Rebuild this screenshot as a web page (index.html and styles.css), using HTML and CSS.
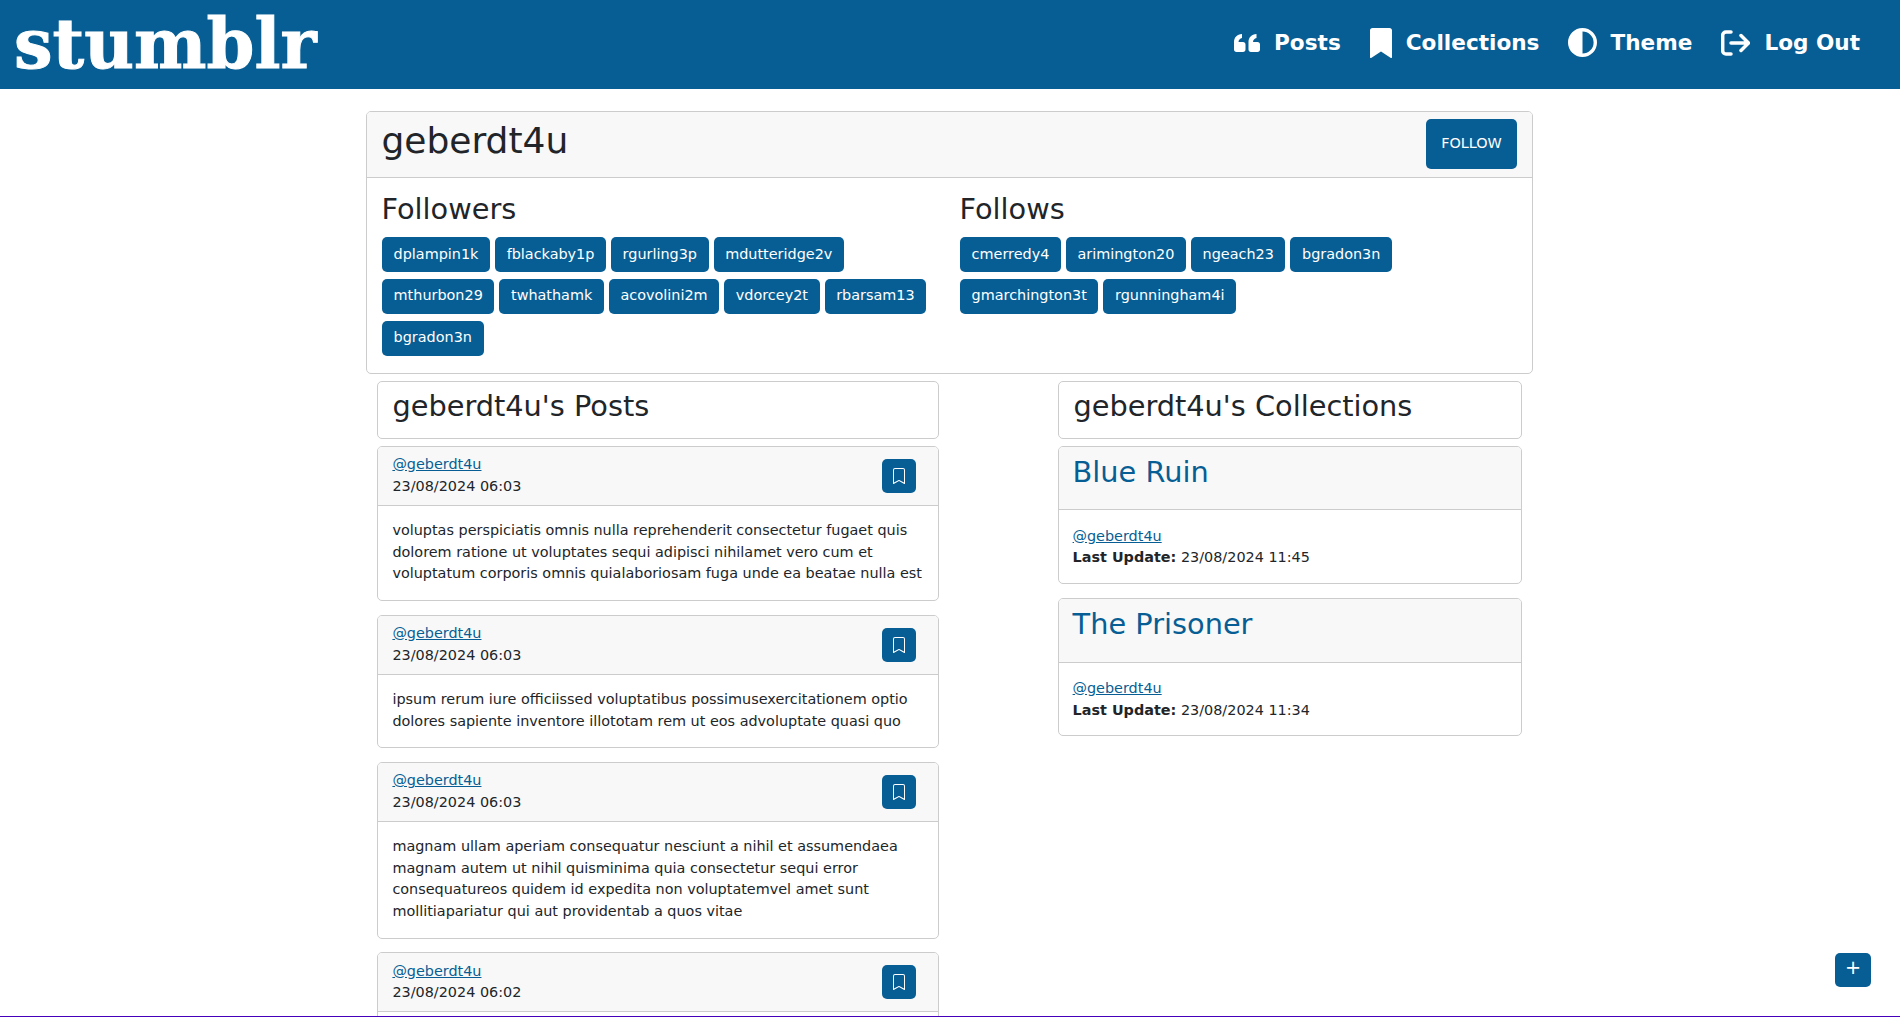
FILE: index.html
```html
<!DOCTYPE html>
<html lang="en">
<head>
    <meta charset="UTF-8">
    <meta name="viewport" content="width=device-width, initial-scale=1.0">
    <title>stumblr</title>
    <link rel="stylesheet" href="styles.css">
</head>
<body>
    <nav class="navbar">
        <a class="logo" href="#">stumblr</a>
        <ul class="nav-links">
            <li><a href="#">
                <svg class="nav-icon" width="26" height="18" viewBox="0 0 26 18"><path d="M0 8C0 3.500 3 .5 8 0v4C6 4.500 4.500 6 4.500 8H9c1.500 0 2.500 1 2.500 2.500v5C11.500 17 10.500 18 9 18H2.500C1 18 0 17 0 15.500zM14.500 8c0-4.500 3-7.500 8-8v4c-2 .5-3.500 2-3.500 4h4.500c1.500 0 2.500 1 2.500 2.500v5c0 1.500-1 2.500-2.500 2.500H17c-1.500 0-2.500-1-2.500-2.500z" fill="#fff"/></svg>
                Posts</a></li>
            <li><a href="#">
                <svg class="nav-icon" width="22" height="30" viewBox="0 0 22 30"><path d="M0 2.500C0 1 1 0 2.500 0h17C21 0 22 1 22 2.500V29a1 1 0 0 1-1.500.8L11 23.500 1.500 29.800A1 1 0 0 1 0 29z" fill="#fff"/></svg>
                Collections</a></li>
            <li><a class="theme-link" href="#">
                <svg class="nav-icon" width="29" height="29" viewBox="0 0 30 30"><path d="M15 0a15 15 0 1 0 0 30 15 15 0 0 0 0-30zm0 26.500V3.500a11.500 11.500 0 0 1 0 23z" fill="#fff"/></svg>
                Theme</a></li>
            <li><a href="#">
                <svg class="nav-icon" width="29" height="26" viewBox="0 0 29 26" fill="none" stroke="#fff" stroke-width="3.500" stroke-linecap="round" stroke-linejoin="round"><path d="M10 2H5a3.300 3.300 0 0 0-3.300 3.300v15.400A3.300 3.300 0 0 0 5 24h5M10 13h17M20 5.500l7.500 7.500-7.500 7.500"/></svg>
                Log Out</a></li>
        </ul>
    </nav>

    <main class="container">
        <section class="card">
            <div class="card-header profile-header">
                <h1 class="username">geberdt4u</h1>
                <button class="btn follow-btn">FOLLOW</button>
            </div>
            <div class="card-body profile-body">
                <div class="profile-col">
                    <h2 class="sub-title">Followers</h2>
                    <div class="tags">
                        <a class="btn tag" href="#">dplampin1k</a>
                        <a class="btn tag" href="#">fblackaby1p</a>
                        <a class="btn tag" href="#">rgurling3p</a>
                        <a class="btn tag" href="#">mdutteridge2v</a>
                        <a class="btn tag" href="#">mthurbon29</a>
                        <a class="btn tag" href="#">twhathamk</a>
                        <a class="btn tag" href="#">acovolini2m</a>
                        <a class="btn tag" href="#">vdorcey2t</a>
                        <a class="btn tag" href="#">rbarsam13</a>
                        <a class="btn tag" href="#">bgradon3n</a>
                    </div>
                </div>
                <div class="profile-col">
                    <h2 class="sub-title">Follows</h2>
                    <div class="tags">
                        <a class="btn tag" href="#">cmerredy4</a>
                        <a class="btn tag" href="#">arimington20</a>
                        <a class="btn tag" href="#">ngeach23</a>
                        <a class="btn tag" href="#">bgradon3n</a>
                        <a class="btn tag" href="#">gmarchington3t</a>
                        <a class="btn tag" href="#">rgunningham4i</a>
                    </div>
                </div>
            </div>
        </section>

        <div class="columns">
            <div>
                <div class="card title-card"><h2 class="sub-title">geberdt4u's Posts</h2></div>

                <article class="card post">
                    <div class="card-header post-header">
                        <div class="post-meta">
                            <a href="#">@geberdt4u</a>
                            <div>23/08/2024 06:03</div>
                        </div>
                        <button class="btn icon-btn"><svg width="14" height="16" viewBox="2 0 12 16"><path d="M2 2a2 2 0 0 1 2-2h8a2 2 0 0 1 2 2v13.500a.5.500 0 0 1-.74.439L8 13.069l-5.260 2.870A.5.500 0 0 1 2 15.500V2zm2-1a1 1 0 0 0-1 1v12.566l4.723-2.482a.5.500 0 0 1 .554 0L13 14.566V2a1 1 0 0 0-1-1H4z" fill="#fff"/></svg></button>
                    </div>
                    <div class="card-body post-text">voluptas perspiciatis omnis nulla reprehenderit consectetur fugaet quis dolorem ratione ut voluptates sequi adipisci nihilamet vero cum et voluptatum corporis omnis quialaboriosam fuga unde ea beatae nulla est</div>
                </article>

                <article class="card post">
                    <div class="card-header post-header">
                        <div class="post-meta">
                            <a href="#">@geberdt4u</a>
                            <div>23/08/2024 06:03</div>
                        </div>
                        <button class="btn icon-btn"><svg width="14" height="16" viewBox="2 0 12 16"><path d="M2 2a2 2 0 0 1 2-2h8a2 2 0 0 1 2 2v13.500a.5.500 0 0 1-.74.439L8 13.069l-5.260 2.870A.5.500 0 0 1 2 15.500V2zm2-1a1 1 0 0 0-1 1v12.566l4.723-2.482a.5.500 0 0 1 .554 0L13 14.566V2a1 1 0 0 0-1-1H4z" fill="#fff"/></svg></button>
                    </div>
                    <div class="card-body post-text">ipsum rerum iure officiissed voluptatibus possimusexercitationem optio dolores sapiente inventore illototam rem ut eos advoluptate quasi quo</div>
                </article>

                <article class="card post">
                    <div class="card-header post-header">
                        <div class="post-meta">
                            <a href="#">@geberdt4u</a>
                            <div>23/08/2024 06:03</div>
                        </div>
                        <button class="btn icon-btn"><svg width="14" height="16" viewBox="2 0 12 16"><path d="M2 2a2 2 0 0 1 2-2h8a2 2 0 0 1 2 2v13.500a.5.500 0 0 1-.74.439L8 13.069l-5.260 2.870A.5.500 0 0 1 2 15.500V2zm2-1a1 1 0 0 0-1 1v12.566l4.723-2.482a.5.500 0 0 1 .554 0L13 14.566V2a1 1 0 0 0-1-1H4z" fill="#fff"/></svg></button>
                    </div>
                    <div class="card-body post-text">magnam ullam aperiam consequatur nesciunt a nihil et assumendaea magnam autem ut nihil quisminima quia consectetur sequi error consequatureos quidem id expedita non voluptatemvel amet sunt mollitiapariatur qui aut providentab a quos vitae</div>
                </article>

                <article class="card post">
                    <div class="card-header post-header">
                        <div class="post-meta">
                            <a href="#">@geberdt4u</a>
                            <div>23/08/2024 06:02</div>
                        </div>
                        <button class="btn icon-btn"><svg width="14" height="16" viewBox="2 0 12 16"><path d="M2 2a2 2 0 0 1 2-2h8a2 2 0 0 1 2 2v13.500a.5.500 0 0 1-.74.439L8 13.069l-5.260 2.870A.5.500 0 0 1 2 15.500V2zm2-1a1 1 0 0 0-1 1v12.566l4.723-2.482a.5.500 0 0 1 .554 0L13 14.566V2a1 1 0 0 0-1-1H4z" fill="#fff"/></svg></button>
                    </div>
                    <div class="card-body post-text"></div>
                </article>
            </div>

            <div>
                <div class="card title-card"><h2 class="sub-title">geberdt4u's Collections</h2></div>

                <article class="card collection">
                    <div class="card-header collection-header"><a href="#">Blue Ruin</a></div>
                    <div class="card-body post-meta">
                        <a href="#">@geberdt4u</a>
                        <div><b>Last Update:</b> 23/08/2024 11:45</div>
                    </div>
                </article>

                <article class="card collection">
                    <div class="card-header collection-header"><a href="#">The Prisoner</a></div>
                    <div class="card-body post-meta">
                        <a href="#">@geberdt4u</a>
                        <div><b>Last Update:</b> 23/08/2024 11:34</div>
                    </div>
                </article>
            </div>
        </div>
    </main>

    <button class="btn add-btn">+</button>
    <div class="bottom-line"></div>
</body>
</html>
```

FILE: styles.css
```css
html, body {
    height: 100%;
    overflow: hidden;
}

body {
    margin: 0;
    font-family: "DejaVu Sans", sans-serif;
    font-size: 14.400px;
    line-height: 21.600px;
    color: #212529;
    background-color: #fff;
}

a {
    color: #075e94;
}

/* top bar */
.navbar {
    display: flex;
    align-items: center;
    justify-content: space-between;
    height: 89px;
    padding: 0 40px 0 14px;
    background-color: #075e94;
}

.logo {
    font-family: "DejaVu Serif", serif;
    font-weight: bold;
    font-size: 68.500px;
    line-height: 89px;
    color: #fff;
    text-decoration: none;
    -webkit-text-stroke: 1px #fff;
}

.nav-links {
    display: flex;
    align-items: center;
    gap: 29px;
    list-style-type: none;
    margin: 0 0 4px;
    padding: 0;
}

.nav-links a {
    display: flex;
    align-items: center;
    gap: 14px;
    font-size: 21.600px;
    font-weight: bold;
    color: #fff;
    text-decoration: none;
}

.nav-links .theme-link {
    gap: 13px;
}

/* shared */
.container {
    width: 1167px;
    margin: 22px 0 0 366px;
}

.card {
    border: 1px solid #ccc;
    border-radius: 5px;
    background-color: #fff;
    overflow: hidden;
}

.card-header {
    background-color: #f8f8f8;
    border-bottom: 1px solid #ccc;
}

.card-body {
    padding: 14.400px;
}

.btn {
    display: inline-block;
    border: 0;
    border-radius: 5px;
    background-color: #075e94;
    color: #fff;
    font-family: inherit;
    font-size: 14.400px;
    line-height: 21.600px;
    text-decoration: none;
}

.sub-title {
    margin: 0;
    font-size: 28.800px;
    font-weight: normal;
    line-height: 35px;
}

/* profile */
.profile-header {
    display: flex;
    align-items: center;
    justify-content: space-between;
    box-sizing: border-box;
    height: 66px;
    padding: 0 15px 2px 14.400px;
}

.username {
    margin: 0 0 7px;
    font-size: 36px;
    font-weight: normal;
    line-height: 43px;
}

.follow-btn {
    width: 91px;
    height: 50px;
}

.profile-body {
    display: grid;
    grid-template-columns: 578px 1fr;
    padding: 14px 15px 17px;
}

.profile-col {
    padding-right: 15px;
}

.profile-col .sub-title {
    margin-left: -0.600px;
}

.tags {
    display: flex;
    flex-wrap: wrap;
    gap: 7.400px 5px;
    margin-top: 10px;
}

.tag {
    padding: 6.500px 11.600px;
}

/* columns */
.columns {
    display: grid;
    grid-template-columns: 562px 464px;
    justify-content: space-between;
    margin-top: 7px;
    padding: 0 11px;
}

.title-card {
    height: 58px;
    padding: 7px 14.400px;
    box-sizing: border-box;
    margin-bottom: 7px;
}

.post {
    margin-bottom: 13.800px;
}

.post-header {
    display: flex;
    align-items: center;
    justify-content: space-between;
    height: 58px;
    padding: 0 22px 0 14.400px;
}

.post-text {
    padding-bottom: 15px;
}

.icon-btn {
    display: flex;
    align-items: center;
    justify-content: center;
    width: 34px;
    height: 34px;
    padding: 0;
}

/* collections */
.collection {
    margin-bottom: 14.400px;
}

.collection-header {
    height: 63.600px;
    padding: 6px 13.600px;
    box-sizing: border-box;
    font-size: 28.800px;
    line-height: 38px;
}

.collection-header a {
    text-decoration: none;
}

.collection .post-meta {
    padding: 15.400px 13.600px 14px;
}

.add-btn {
    position: fixed;
    right: 29px;
    bottom: 30px;
    width: 36px;
    height: 34px;
    padding: 0 0 4px;
    font-size: 19.200px;
}

.bottom-line {
    position: fixed;
    left: 0;
    right: 0;
    bottom: 0;
    height: 1px;
    background-color: #4400bb;
}
```
